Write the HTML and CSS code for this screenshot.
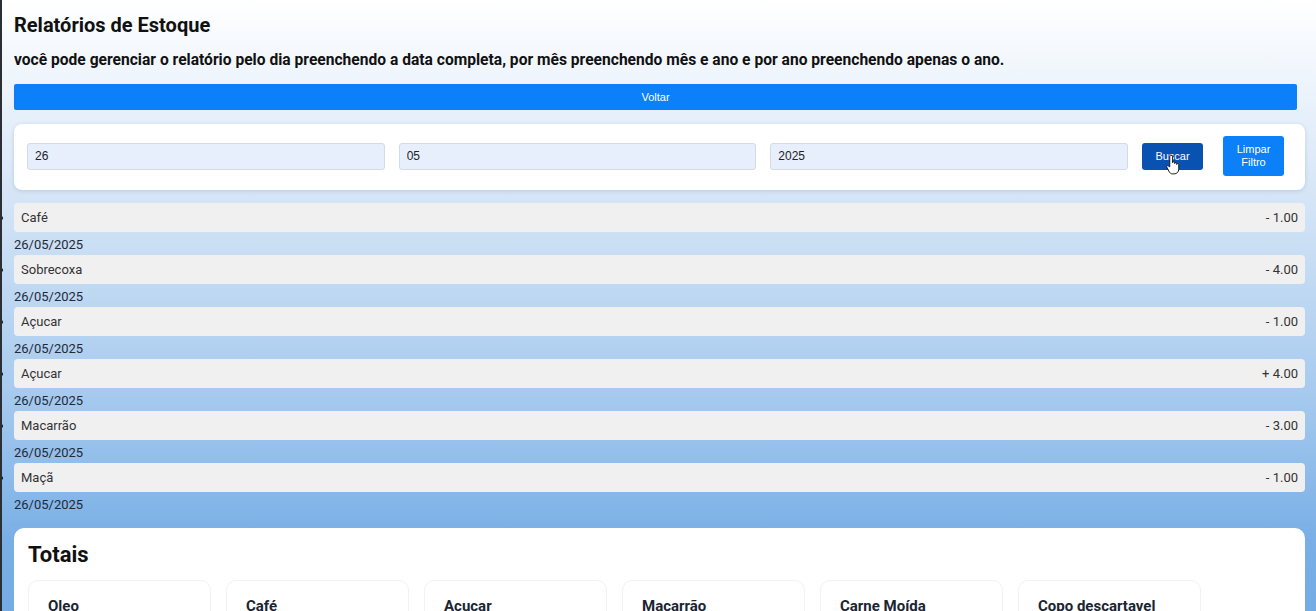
FILE: index.html
```html
<!DOCTYPE html>
<html lang="pt-BR">
<head>
<meta charset="utf-8">
<title>Relatórios de Estoque</title>
<link rel="stylesheet" href="styles.css">
</head>
<body>
<div class="page">
  <h1 class="title">Relatórios de Estoque</h1>
  <p class="subtitle">você pode gerenciar o relatório pelo dia preenchendo a data completa, por mês preenchendo mês e ano e por ano preenchendo apenas o ano.</p>
  <button class="btn-back">Voltar</button>

  <div class="filter-card">
    <input class="field" type="text" value="26">
    <input class="field" type="text" value="05">
    <input class="field" type="text" value="2025">
    <button class="btn-search">Buscar<svg class="cursor" viewBox="0 0 16 22" width="15" height="21"><path d="M5 1c1 0 2 1 2 2v6c0-1.3 2.2-1.3 2.2 0v1c0-1.3 2.2-1.3 2.2 0v1c0-1.3 2.2-1.3 2.2 0v5c0 3-2 5-5 5H7c-2 0-3-1-4-3l-2-4c-.8-1.2.3-2.3 1.3-1.6L4 13.5V3c0-1 .5-2 1-2z" fill="#fff" stroke="#111" stroke-width="1" stroke-linejoin="round"/></svg></button>
    <button class="btn-clear">Limpar<br>Filtro</button>
  </div>

  <ul class="report-list">
    <li><div class="row"><span>Café</span><span>- 1.00</span></div><div class="date">26/05/2025</div></li>
    <li><div class="row"><span>Sobrecoxa</span><span>- 4.00</span></div><div class="date">26/05/2025</div></li>
    <li><div class="row"><span>Açucar</span><span>- 1.00</span></div><div class="date">26/05/2025</div></li>
    <li><div class="row"><span>Açucar</span><span>+ 4.00</span></div><div class="date">26/05/2025</div></li>
    <li><div class="row"><span>Macarrão</span><span>- 3.00</span></div><div class="date">26/05/2025</div></li>
    <li><div class="row"><span>Maçã</span><span>- 1.00</span></div><div class="date">26/05/2025</div></li>
  </ul>

  <div class="totals-card">
    <h2 class="totals-title">Totais</h2>
    <div class="totals-grid">
      <div class="total-item"><h3>Oleo</h3></div>
      <div class="total-item"><h3>Café</h3></div>
      <div class="total-item"><h3>Açucar</h3></div>
      <div class="total-item"><h3>Macarrão</h3></div>
      <div class="total-item"><h3>Carne Moída</h3></div>
      <div class="total-item"><h3>Copo descartavel</h3></div>
    </div>
  </div>
</div>
</body>
</html>
```

FILE: styles.css
```css
html {
  background: linear-gradient(180deg, #ffffff 0px, #eaf2fb 100px, #c9def4 250px, #a5c9ee 400px, #79afe6 540px, #6aa5e3 760px);
  min-height: 100%;
}
body {
  margin: 0;
  font-family: Roboto, "Liberation Sans", Arial, sans-serif;
  color: #111;
  border-left: 2px solid #2a2f36;
}
.page {
  padding: 12px 11px 20px 12px;
}
.title {
  margin: 0;
  font-size: 20px;
  font-weight: 700;
  line-height: 26px;
  color: #111;
}
.subtitle {
  margin: 12px 0 0;
  font-size: 15.6px;
  font-weight: 700;
  line-height: 20px;
  color: #111;
}
.btn-back {
  display: block;
  width: calc(100% - 8px);
  height: 26px;
  margin-top: 14px;
  border: none;
  border-radius: 2px;
  background: #0b80f8;
  color: #fff;
  font-family: "Liberation Sans", Arial, sans-serif;
  font-size: 11px;
  padding: 0;
}
.filter-card {
  margin-top: 14px;
  background: #fff;
  border-radius: 8px;
  box-shadow: 0 1px 4px rgba(40, 80, 130, 0.18);
  padding: 12px 21px 14px 13px;
  display: flex;
  align-items: center;
  height: 66px;
  box-sizing: border-box;
}
.field {
  flex: 1;
  height: 27px;
  box-sizing: border-box;
  background: #e7effc;
  border: 1px solid #d6dbe2;
  border-radius: 3px;
  padding: 0 7px;
  font-family: "Liberation Sans", Arial, sans-serif;
  font-size: 12px;
  color: #222;
  margin-right: 14px;
  min-width: 0;
}
.btn-search {
  position: relative;
  width: 61px;
  height: 27px;
  flex: none;
  border: none;
  border-radius: 3px;
  background: #0a52b2;
  color: #fff;
  font-family: "Liberation Sans", Arial, sans-serif;
  font-size: 11px;
  padding: 0;
}
.cursor {
  position: absolute;
  left: 24px;
  top: 11px;
}
.btn-clear {
  width: 61px;
  height: 40px;
  flex: none;
  margin-left: 20px;
  border: none;
  border-radius: 3px;
  background: #0b80f8;
  color: #fff;
  font-family: "Liberation Sans", Arial, sans-serif;
  font-size: 11px;
  line-height: 13px;
  padding: 0;
}
.report-list {
  margin: 13px 0 0;
  padding-left: 0;
  list-style: disc outside;
  font-size: 13px;
}
.report-list li {
  margin: 0;
}
.row {
  display: flex;
  justify-content: space-between;
  align-items: center;
  height: 29px;
  background: #f0f0f1;
  border-radius: 4px;
  padding: 0 7px;
  color: #333;
  font-size: 13px;
}
.date {
  height: 23px;
  line-height: 25px;
  font-size: 13px;
  color: #1f2a38;
}
.totals-card {
  margin-top: 13px;
  background: #fff;
  border-radius: 10px;
  padding: 12px 14px 30px;
}
.totals-title {
  margin: 0;
  font-size: 22px;
  font-weight: 700;
  line-height: 30px;
  color: #111;
}
.totals-grid {
  display: flex;
  gap: 15px;
  margin-top: 10px;
}
.total-item {
  width: 183px;
  height: 90px;
  box-sizing: border-box;
  border: 1px solid #f1f2f4;
  border-radius: 10px;
  padding: 16px 19px;
}
.total-item h3 {
  margin: 0;
  font-size: 15px;
  font-weight: 700;
  color: #1a2433;
}
```
